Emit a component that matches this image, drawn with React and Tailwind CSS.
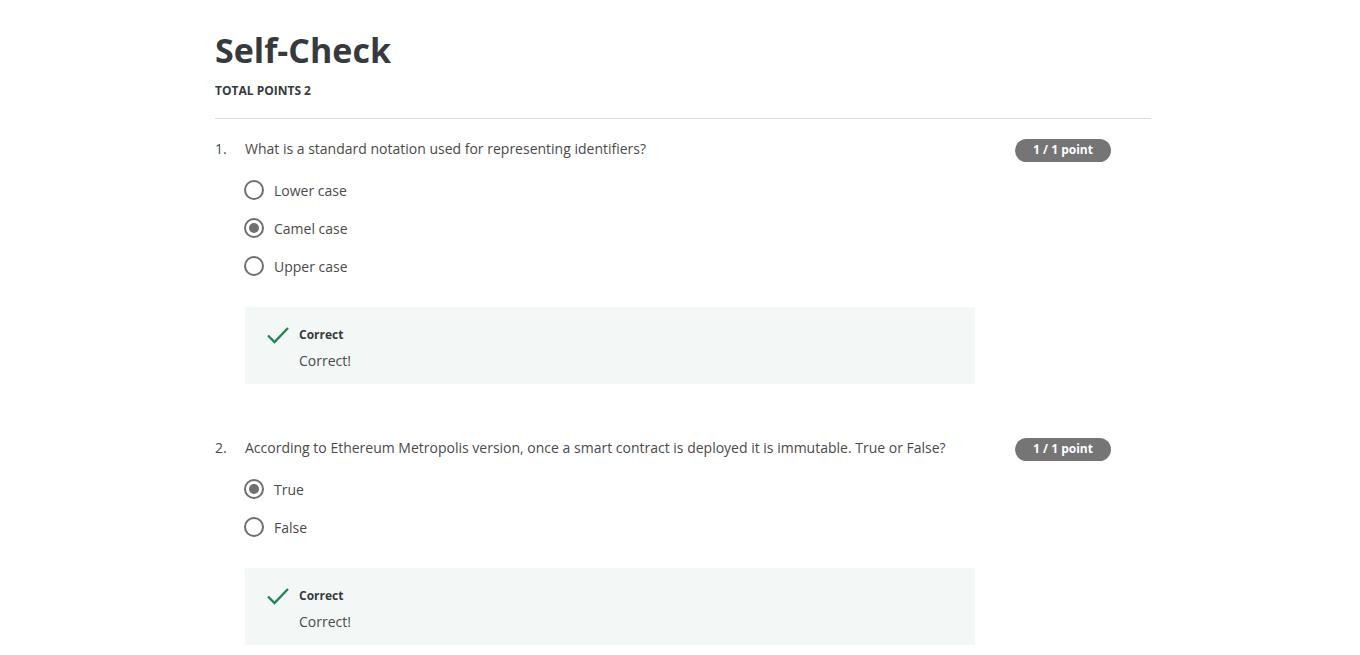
import React from "react";

function Radio({ checked }) {
  return (
    <span className="w-[20px] h-[20px] rounded-full border-2 border-[#6f6f6f] flex items-center justify-center shrink-0">
      {checked && <span className="w-[10px] h-[10px] rounded-full bg-[#6f6f6f]" />}
    </span>
  );
}

function Question({ num, text, options, checked }) {
  return (
    <div className="flex flex-col">
      <div className="flex items-center h-[24px]">
        <div className="w-[30px] text-[14px] text-[#4a4a4a]">{num}.</div>
        <div className="flex-1 text-[14px] text-[#4a4a4a]">{text}</div>
        <div className="mr-[40px] w-[96px] h-[23px] translate-y-[2px] rounded-full bg-[#757575] text-white text-[12px] font-bold flex items-center justify-center">
          1 / 1 point
        </div>
      </div>
      <div className="flex flex-col pl-[29px] mt-[20px] gap-[18px]">
        {options.map((o, i) => (
          <div key={o} className="flex items-center h-[20px] gap-[10px]">
            <Radio checked={i === checked} />
            <span className="text-[14px] text-[#4a4a4a]">{o}</span>
          </div>
        ))}
      </div>
      <div className="ml-[30px] mt-[31px] w-[730px] h-[77px] bg-[#f3f8f6] flex pl-[21px] pt-[18px]">
        <svg width="24" height="20" viewBox="0 0 24 20" className="shrink-0">
          <path d="M2 10.5 L8.5 17 L22 3" fill="none" stroke="#1f8354" strokeWidth="2.3" />
        </svg>
        <div className="ml-[9px] flex flex-col pt-[1px]">
          <span className="text-[12px] font-bold text-[#373a3c] leading-[18px]">Correct</span>
          <span className="text-[14px] text-[#4a4a4a] leading-[20px] mt-[7px]">Correct!</span>
        </div>
      </div>
    </div>
  );
}

export default function App() {
  return (
    <div className="min-h-[655px] bg-white" style={{ fontFamily: '"Open Sans", sans-serif' }}>
      <div className="ml-[215px] w-[936px] pt-[27px]">
        <h1 className="text-[34px] font-bold text-[#373a3c] leading-[46px]">Self-Check</h1>
        <div className="mt-[8px] text-[12px] font-bold text-[#373a3c] leading-[20px]">TOTAL POINTS 2</div>
        <div className="mt-[17px] border-t border-[#dcdcdc]" />
        <div className="pt-[17px] flex flex-col gap-[51px]">
          <Question
            num={1}
            text="What is a standard notation used for representing identifiers?"
            options={["Lower case", "Camel case", "Upper case"]}
            checked={1}
          />
          <Question
            num={2}
            text="According to Ethereum Metropolis version, once a smart contract is deployed it is immutable. True or False?"
            options={["True", "False"]}
            checked={0}
          />
        </div>
      </div>
    </div>
  );
}
